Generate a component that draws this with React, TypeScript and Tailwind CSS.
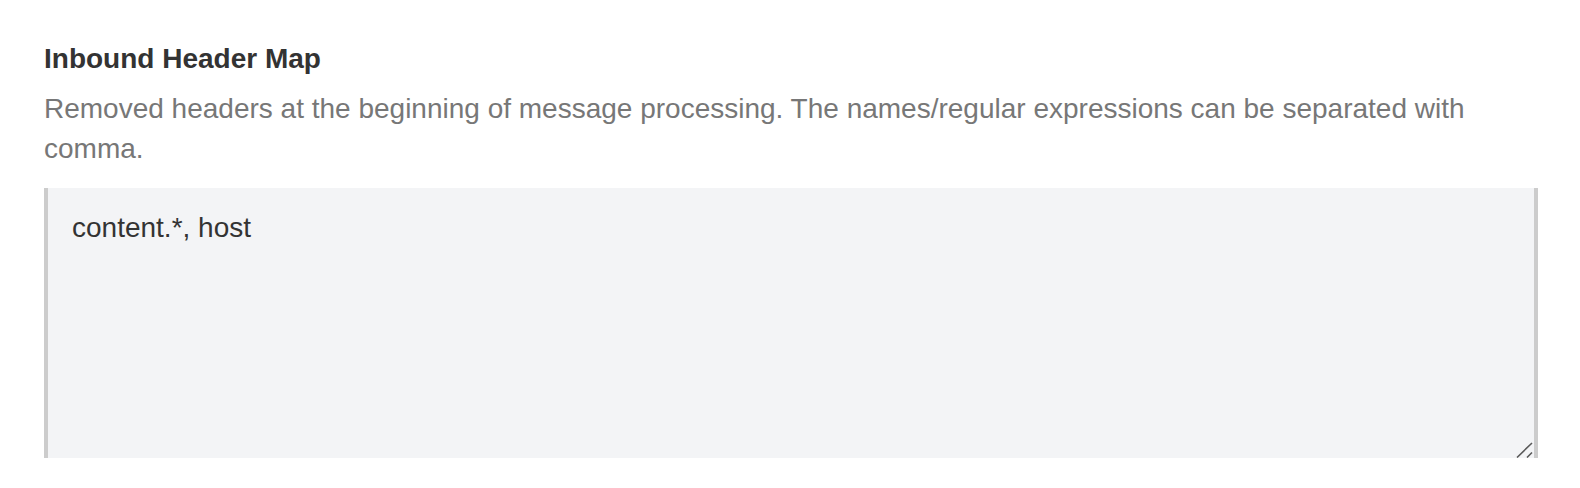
export default function App() {
  return (
    <div
      className="w-[1580px] h-[488px] bg-white pl-[44px] pr-[42px] pt-[43px]"
      style={{ fontFamily: '"Liberation Sans", Arial, sans-serif' }}
    >
      <h3 className="text-[28px] leading-[32px] font-bold text-[#333333]">
        Inbound Header Map
      </h3>
      <p className="mt-[14px] text-[28px] leading-[40px] text-[#777777]">
        Removed headers at the beginning of message processing. The
        names/regular expressions can be separated with comma.
      </p>
      <div className="relative mt-[19px]">
        <textarea
          className="block w-full h-[270px] bg-[#f3f4f6] border-x-4 border-[#cccccc] pl-[24px] pr-[24px] pt-[20px] text-[28px] leading-[40px] text-[#333333] outline-none resize-none"
          style={{ fontFamily: '"Liberation Sans", Arial, sans-serif' }}
          defaultValue="content.*, host"
        />
        <svg
          className="absolute right-[4px] bottom-0 w-[18px] h-[18px] pointer-events-none"
          viewBox="0 0 18 18"
        >
          <path d="M1 17.5 L16 3 M11 17.5 L16 12.5" stroke="#5a5a5a" strokeWidth="1.6" fill="none" />
        </svg>
      </div>
    </div>
  );
}
